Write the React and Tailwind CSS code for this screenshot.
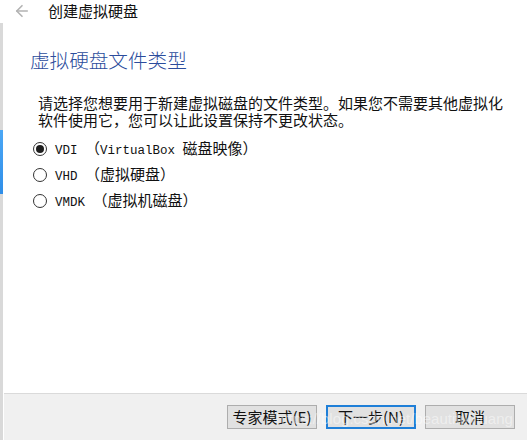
import { ArrowLeft } from 'lucide-react';

const CJK = "font-['Noto_Sans_CJK_SC',sans-serif]";
const MONO = "font-['Liberation_Mono','Noto_Sans_CJK_SC',monospace]";

const OPTIONS = [
  { id: 'vdi', code: 'VDI', note: 'VirtualBox', cjk: '磁盘映像', checked: true },
  { id: 'vhd', code: 'VHD', note: '', cjk: '虚拟硬盘', checked: false },
  { id: 'vmdk', code: 'VMDK', note: '', cjk: '虚拟机磁盘', checked: false },
];

function Radio({ checked }) {
  return (
    <span className="w-[14px] h-[14px] rounded-full border border-[#333] bg-white flex items-center justify-center shrink-0">
      {checked && <span className="w-[8px] h-[8px] rounded-full bg-[#1e1e1e]" />}
    </span>
  );
}

function Btn({ children, focused }) {
  return (
    <button
      className={`w-[90px] h-[24px] flex items-center justify-center bg-[#e1e1e1] text-[15px] text-[#111] ${CJK} ${
        focused ? 'border-2 border-[#1f7fd8]' : 'border border-[#adadad]'
      }`}
    >
      {children}
    </button>
  );
}

export default function App() {
  return (
    <div className={`relative w-[527px] h-[440px] bg-white flex overflow-hidden ${CJK}`}>
      {/* left edge strip */}
      <div className="w-[3px] flex flex-col pt-[23px]">
        <div className="h-[107px] bg-[#d9d9d9]" />
        <div className="h-[64px] bg-gradient-to-b from-[#4ba7f5] to-[#2f8ee8]" />
        <div className="flex-1 bg-[#d9d9d9]" />
      </div>

      <div className="flex-1 flex flex-col">
        {/* title bar */}
        <div className="h-[22px] flex items-center">
          <ArrowLeft size={18} strokeWidth={2.2} className="ml-[10px] text-[#b3b3b3]" />
          <span className="ml-[17px] text-[15px] leading-[18px] text-[#111]">创建虚拟硬盘</span>
        </div>

        {/* heading */}
        <h1 className="mt-[24px] pl-[27px] text-[19.6px] leading-[28px] font-light text-[#2b4c9c]">
          虚拟硬盘文件类型
        </h1>

        {/* description */}
        <p className="mt-[20px] pl-[35px] text-[15px] leading-[17px] text-[#111]">
          请选择您想要用于新建虚拟磁盘的文件类型。如果您不需要其他虚拟化
          <br />
          软件使用它，您可以让此设置保持不更改状态。
        </p>

        {/* options */}
        <div className="mt-[8px] pl-[30px] flex flex-col">
          {OPTIONS.map(o => (
            <label key={o.id} className="h-[26px] flex items-center">
              <Radio checked={o.checked} />
              <span className="ml-[8px] flex items-baseline text-[#111] whitespace-pre">
                <span className={`${MONO} text-[12.5px]`}>{o.code + ' '}</span>
                <span className="text-[15px]">（</span>
                {o.note && <span className={`${MONO} text-[12.5px]`}>{o.note + ' '}</span>}
                <span className="text-[15px]">{o.cjk}）</span>
              </span>
            </label>
          ))}
        </div>

        <div className="flex-1" />

        {/* footer */}
        <div className="h-[47px] ml-[1px] border-t border-[#dadada] bg-[#f0f0f0] flex justify-end gap-[9px] pr-[12px] pt-[11px]">
          <Btn>专家模式(E)</Btn>
          <Btn focused>下一步(N)</Btn>
          <Btn>取消</Btn>
        </div>
      </div>

      {/* watermark */}
      <span className="absolute left-[276px] top-[408px] text-[15px] text-white/45 font-['Liberation_Sans',sans-serif] pointer-events-none">
        https://blog.csdn.net/beautifulhuang
      </span>
    </div>
  );
}
